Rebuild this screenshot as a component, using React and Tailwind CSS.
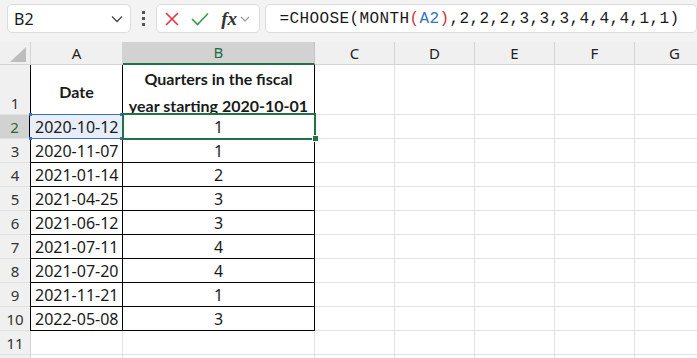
import React from "react";

const COLS = [
  { key: "A", w: 92 },
  { key: "B", w: 192 },
  { key: "C", w: 80 },
  { key: "D", w: 80 },
  { key: "E", w: 80 },
  { key: "F", w: 80 },
  { key: "G", w: 80 },
];

const DATA = [
  ["2020-10-12", "1"],
  ["2020-11-07", "1"],
  ["2021-01-14", "2"],
  ["2021-04-25", "3"],
  ["2021-06-12", "3"],
  ["2021-07-11", "4"],
  ["2021-07-20", "4"],
  ["2021-11-21", "1"],
  ["2022-05-08", "3"],
];

const cellFont = { fontFamily: '"Noto Sans", Arial, sans-serif' };
const boldFont = { fontFamily: 'Lato, "Noto Sans", Arial, sans-serif' };

function RowHeader({ n, h, selected }) {
  return (
    <div
      className={
        "shrink-0 w-[31px] flex items-end justify-center border-b border-b-[#e1e1e1] " +
        (selected
          ? "bg-[#d2d2d2] text-[#1e6b41] border-r-2 border-r-[#217346]"
          : "bg-[#f0f0f0] text-[#333333] border-r border-r-[#d4d4d4]")
      }
      style={{ height: h }}
    >
      <span className="text-[15px] leading-[22px]">{n}</span>
    </div>
  );
}

export default function App() {
  return (
    <div
      className="relative w-[697px] h-[358px] overflow-hidden bg-white text-[#1a1a1a]"
      style={cellFont}
    >
      {/* Toolbar */}
      <div className="h-[42px] bg-[#f3f3f3] flex items-start pt-[4px] pl-[7px] gap-0">
        <div className="w-[126px] h-[29px] bg-white border border-[#dcdcdc] rounded-[5px] flex items-center justify-between pl-[6px] pr-[7px]">
          <span className="text-[16px] text-[#1a1a1a]">B2</span>
          <svg width="12" height="8" viewBox="0 0 12 8">
            <path d="M1 1.5 L6 6.5 L11 1.5" fill="none" stroke="#444" strokeWidth="1.3" />
          </svg>
        </div>
        <div className="w-[26px] h-[29px] flex flex-col items-center justify-center gap-[3px]">
          <div className="w-[3px] h-[3px] bg-[#555]" />
          <div className="w-[3px] h-[3px] bg-[#555]" />
          <div className="w-[3px] h-[3px] bg-[#555]" />
        </div>
        <div className="w-[106px] h-[29px] bg-white border border-[#dcdcdc] rounded-[5px] flex items-center pl-[8px]">
          <svg width="14" height="14" viewBox="0 0 14 14">
            <path d="M1 1 L13 13 M13 1 L1 13" stroke="#e8333a" strokeWidth="1.6" fill="none" />
          </svg>
          <svg className="ml-[12px]" width="18" height="14" viewBox="0 0 18 14">
            <path d="M1 7 L6.5 12.5 L17 1.5" stroke="#3a9a48" strokeWidth="1.6" fill="none" />
          </svg>
          <span
            className="ml-[12px] text-[19px] italic font-bold text-[#333] leading-none"
            style={{ fontFamily: '"Liberation Serif", "DejaVu Serif", serif' }}
          >
            fx
          </span>
          <svg className="ml-[3px]" width="10" height="6" viewBox="0 0 10 6">
            <path d="M1 1 L5 5 L9 1" fill="none" stroke="#9a9a9a" strokeWidth="1.2" />
          </svg>
        </div>
        <div className="ml-[5px] w-[440px] h-[29px] bg-white border border-[#dcdcdc] rounded-[5px] flex items-center pl-[13px]">
          <span
            className="text-[16px] tracking-[0.4px] text-[#1a1a1a] whitespace-nowrap"
            style={{ fontFamily: '"Liberation Mono", "DejaVu Sans Mono", monospace' }}
          >
            =CHOOSE(MONTH<span className="text-[#d13438]">(</span>
            <span className="text-[#2f75c0]">A2</span>
            <span className="text-[#d13438]">)</span>,2,2,2,3,3,3,4,4,4,1,1)
          </span>
        </div>
      </div>

      {/* Column headers */}
      <div className="flex h-[23px]">
        <div className="shrink-0 w-[31px] h-[23px] bg-[#f0f0f0] border-r border-r-[#d4d4d4] border-b border-b-[#d4d4d4] relative">
          <svg className="absolute left-[10px] top-[5px]" width="16" height="15" viewBox="0 0 16 15">
            <path d="M16 0 L16 15 L0 15 Z" fill="#bdbdbd" />
          </svg>
        </div>
        {COLS.map((c) => (
          <div
            key={c.key}
            className={
              "shrink-0 h-[23px] flex items-center justify-center text-[15px] " +
              (c.key === "B"
                ? "bg-[#d2d2d2] text-[#1e6b41] border-b-2 border-b-[#217346] border-r border-r-[#c4c4c4]"
                : "bg-[#f0f0f0] text-[#222] border-b border-b-[#d4d4d4] border-r border-r-[#d4d4d4]")
            }
            style={{ width: c.w }}
          >
            {c.key}
          </div>
        ))}
      </div>

      {/* Row 1 */}
      <div className="flex h-[50px]">
        <RowHeader n={1} h={50} />
        <div
          className="shrink-0 -ml-[1px] w-[93px] h-[50px] border-l border-l-black border-r border-r-black border-b border-b-black flex items-center justify-center pt-[4px] font-bold text-[16px] leading-[25px]"
          style={boldFont}
        >
          Date
        </div>
        <div
          className="shrink-0 w-[192px] h-[50px] border-r border-r-black border-b border-b-black flex flex-col items-center justify-start font-bold text-[16px] leading-[27px] whitespace-nowrap overflow-hidden"
          style={boldFont}
        >
          <span>Quarters in the fiscal</span>
          <span>year starting 2020-10-01</span>
        </div>
        {COLS.slice(2).map((c) => (
          <div
            key={c.key}
            className="shrink-0 h-[50px] border-r border-r-[#e1e1e1] border-b border-b-[#e1e1e1]"
            style={{ width: c.w }}
          />
        ))}
      </div>

      {/* Data rows */}
      {DATA.map((r, i) => (
        <div key={i} className="flex h-[24px]">
          <RowHeader n={i + 2} h={24} selected={i === 0} />
          <div
            className={
              "shrink-0 h-[24px] border-l border-l-black border-r border-r-black border-b border-b-black flex items-center text-[16px] " +
              (i === 0 ? "bg-[#e8eef9] -ml-[2px] w-[94px] pl-[5px]" : "-ml-[1px] w-[93px] pl-[4px]")
            }
          >
            {r[0]}
          </div>
          <div className="shrink-0 w-[192px] h-[24px] border-r border-r-black border-b border-b-black flex items-center justify-center text-[16px]">
            {r[1]}
          </div>
          {COLS.slice(2).map((c) => (
            <div
              key={c.key}
              className="shrink-0 h-[24px] border-r border-r-[#e1e1e1] border-b border-b-[#e1e1e1]"
              style={{ width: c.w }}
            />
          ))}
        </div>
      ))}

      {/* Empty rows */}
      {[11, ""].map((n, idx) => (
        <div key={idx} className="flex h-[24px]">
          <RowHeader n={n} h={24} />
          {COLS.map((c) => (
            <div
              key={c.key}
              className="shrink-0 h-[24px] border-r border-r-[#e1e1e1] border-b border-b-[#e1e1e1]"
              style={{ width: c.w }}
            />
          ))}
        </div>
      ))}

      {/* A2 reference highlight (overlay) */}
      <div className="absolute left-[31px] top-[114px] w-[91px] h-[1px] bg-[#3b6fc4]" />
      <div className="absolute left-[31px] top-[138px] w-[91px] h-[1px] bg-[#3b6fc4]" />
      <div className="absolute left-[29px] top-[113px] w-[3px] h-[3px] bg-[#3b6fc4]" />
      <div className="absolute left-[120px] top-[113px] w-[3px] h-[3px] bg-[#3b6fc4]" />
      <div className="absolute left-[29px] top-[137px] w-[3px] h-[3px] bg-[#3b6fc4]" />
      <div className="absolute left-[120px] top-[137px] w-[3px] h-[3px] bg-[#3b6fc4]" />

      {/* B2 selection (overlay) */}
      <div className="absolute left-[122px] top-[113px] w-[194px] h-[27px] border-2 border-[#217346]" />
      <div className="absolute left-[312px] top-[135px] w-[7px] h-[7px] bg-[#217346] border border-white" />
    </div>
  );
}
